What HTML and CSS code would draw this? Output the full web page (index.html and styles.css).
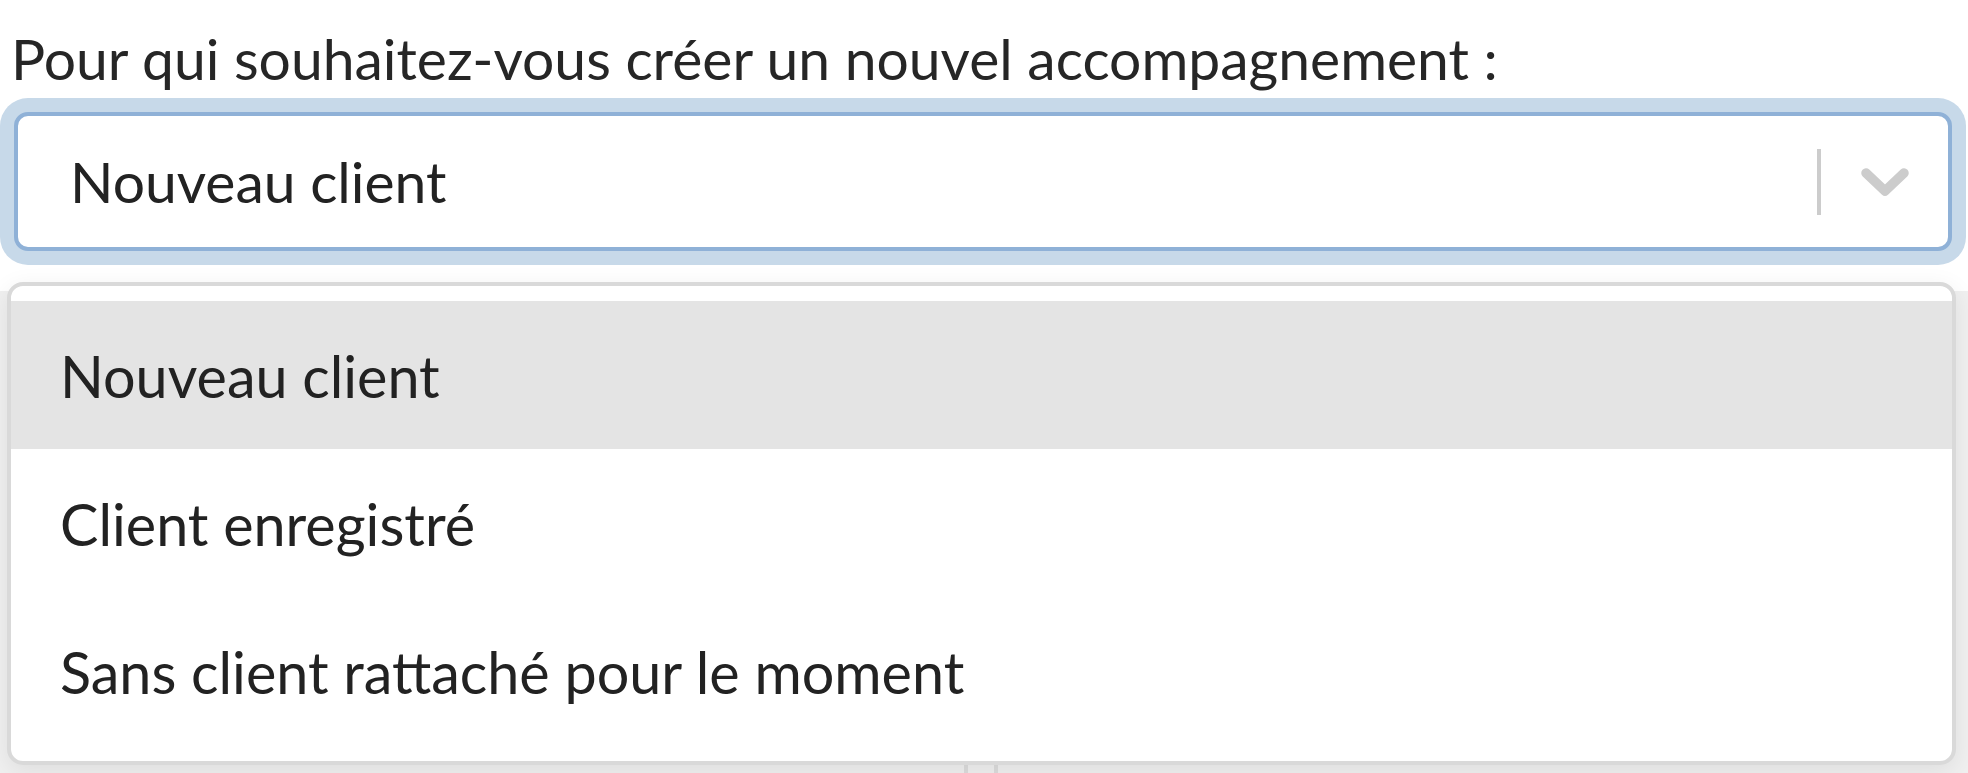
FILE: index.html
```html
<!DOCTYPE html>
<html lang="fr">
<head>
    <meta charset="UTF-8">
    <meta name="viewport" content="width=device-width, initial-scale=1.0">
    <title>Nouvel accompagnement</title>
    <link rel="stylesheet" href="styles.css">
</head>
<body>
    <div class="field">
        <label class="field-label" for="clientSelect">Pour qui souhaitez-vous créer un nouvel accompagnement&nbsp;:</label>

        <div class="select">
            <div class="select-control" id="clientSelect">
                <div class="select-value">Nouveau client</div>
                <div class="select-indicators">
                    <span class="select-separator"></span>
                    <svg class="select-chevron" viewBox="0 0 50 32" width="50" height="32">
                        <path d="M6 7 L25 25 L44 7" fill="none" stroke="currentColor" stroke-width="9.5" stroke-linecap="round" stroke-linejoin="round"/>
                    </svg>
                </div>
            </div>

            <!-- Open dropdown menu -->
            <div class="select-menu">
                <div class="select-option is-focused">Nouveau client</div>
                <div class="select-option">Client enregistré</div>
                <div class="select-option">Sans client rattaché pour le moment</div>
            </div>
        </div>
    </div>

    <!-- Content under the menu -->
    <div class="under">
        <div class="under-col wide"></div>
        <div class="under-col narrow"></div>
        <div class="under-col"></div>
    </div>
</body>
</html>
```

FILE: styles.css
```css
body {
    font-family: "Lato", "Noto Sans", sans-serif;
    background-color: #ffffff;
    color: #222222;
    margin: 0;
    overflow: hidden;
}

.field {
    padding: 0 16px 0 14px;
}

.field-label {
    display: block;
    font-size: 57px;
    line-height: 60px;
    padding-top: 28px;
    margin-left: -3px;
    color: #262626;
}

.select {
    position: relative;
    margin-top: 24px;
}

.select-control {
    display: flex;
    align-items: center;
    height: 139px;
    box-sizing: border-box;
    border: 4px solid #8fb1d7;
    border-radius: 14px;
    box-shadow: 0 0 0 14px #c7d9e9;
    background-color: #ffffff;
}

.select-value {
    flex: 1;
    font-size: 57px;
    padding-left: 52px;
    padding-bottom: 2px;
    color: #222222;
}

.select-indicators {
    display: flex;
    align-items: center;
    height: 100%;
}

.select-separator {
    width: 4px;
    height: 66px;
    background-color: #cccccc;
}

.select-chevron {
    color: #cccccc;
    margin: 0 38px 0 39px;
}

.select-menu {
    position: absolute;
    top: 170px;
    left: -7px;
    right: -4px;
    z-index: 2;
    background-color: #ffffff;
    border: 4px solid #d9d9d9;
    border-radius: 16px;
    padding: 15px 0 16px;
    box-shadow: 0 6px 24px rgba(0, 0, 0, 0.08);
}

.select-option {
    height: 148px;
    display: flex;
    align-items: center;
    padding-left: 49px;
    font-size: 57.5px;
    color: #222222;
}

.select-option.is-focused {
    background-color: #e4e4e4;
}

.under {
    display: flex;
    height: 500px;
    margin-top: 40px;
    background-color: #f0f0f0;
}

.under-col {
    flex: 1;
}

.under-col.wide {
    flex: 0 0 964px;
    border-right: 4px solid #dcdcdc;
}

.under-col.narrow {
    flex: 0 0 26px;
    border-right: 4px solid #dcdcdc;
}
```
